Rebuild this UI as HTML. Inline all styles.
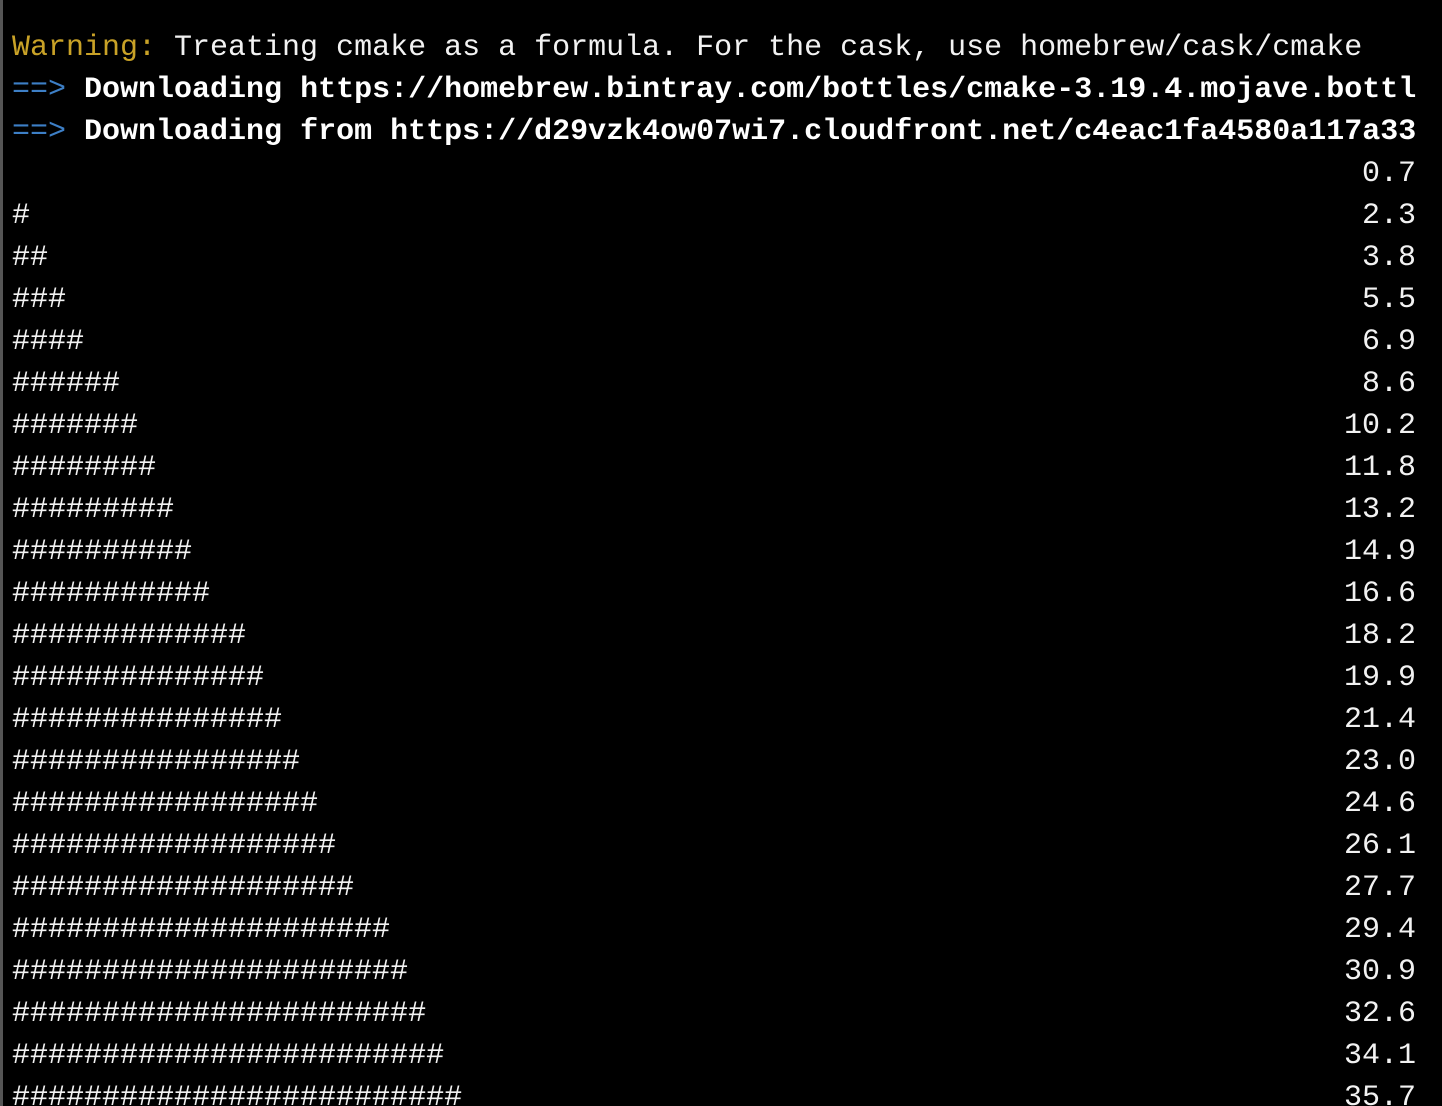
<!DOCTYPE html>
<html><head><meta charset="utf-8"><style>
html,body{margin:0;padding:0;background:#000;width:1442px;height:1106px;overflow:hidden}
body{position:relative;font-family:"Liberation Mono",monospace;font-size:30px;color:#f2f2f2}
.w{position:absolute;left:0;top:3px;width:1442px}
.l{position:absolute;left:12px;height:42px;line-height:42px;white-space:pre}
.r{position:absolute;right:26px;height:42px;line-height:42px;white-space:pre}
.y{color:#c9a227}.b{color:#3d7fc6}.bd{font-weight:bold;color:#fff}
.edge{position:absolute;left:0;top:0;width:3px;height:1106px;background:#555}
</style></head><body>
<div class="edge"></div>
<div class="w">
<div class="l" style="top:24px"><span class="y">Warning:</span> Treating cmake as a formula. For the cask, use homebrew/cask/cmake</div>
<div class="l" style="top:66px"><span class="b">==&gt;</span> <span class="bd">Downloading https://homebrew.bintray.com/bottles/cmake-3.19.4.mojave.bottl</span></div>
<div class="l" style="top:108px"><span class="b">==&gt;</span> <span class="bd">Downloading from https://d29vzk4ow07wi7.cloudfront.net/c4eac1fa4580a117a33</span></div>
<div class="r" style="top:150px">0.7</div>
<div class="l" style="top:192px">#</div><div class="r" style="top:192px">2.3</div>
<div class="l" style="top:234px">##</div><div class="r" style="top:234px">3.8</div>
<div class="l" style="top:276px">###</div><div class="r" style="top:276px">5.5</div>
<div class="l" style="top:318px">####</div><div class="r" style="top:318px">6.9</div>
<div class="l" style="top:360px">######</div><div class="r" style="top:360px">8.6</div>
<div class="l" style="top:402px">#######</div><div class="r" style="top:402px">10.2</div>
<div class="l" style="top:444px">########</div><div class="r" style="top:444px">11.8</div>
<div class="l" style="top:486px">#########</div><div class="r" style="top:486px">13.2</div>
<div class="l" style="top:528px">##########</div><div class="r" style="top:528px">14.9</div>
<div class="l" style="top:570px">###########</div><div class="r" style="top:570px">16.6</div>
<div class="l" style="top:612px">#############</div><div class="r" style="top:612px">18.2</div>
<div class="l" style="top:654px">##############</div><div class="r" style="top:654px">19.9</div>
<div class="l" style="top:696px">###############</div><div class="r" style="top:696px">21.4</div>
<div class="l" style="top:738px">################</div><div class="r" style="top:738px">23.0</div>
<div class="l" style="top:780px">#################</div><div class="r" style="top:780px">24.6</div>
<div class="l" style="top:822px">##################</div><div class="r" style="top:822px">26.1</div>
<div class="l" style="top:864px">###################</div><div class="r" style="top:864px">27.7</div>
<div class="l" style="top:906px">#####################</div><div class="r" style="top:906px">29.4</div>
<div class="l" style="top:948px">######################</div><div class="r" style="top:948px">30.9</div>
<div class="l" style="top:990px">#######################</div><div class="r" style="top:990px">32.6</div>
<div class="l" style="top:1032px">########################</div><div class="r" style="top:1032px">34.1</div>
<div class="l" style="top:1074px">#########################</div><div class="r" style="top:1074px">35.7</div>
</div>
</body></html>
